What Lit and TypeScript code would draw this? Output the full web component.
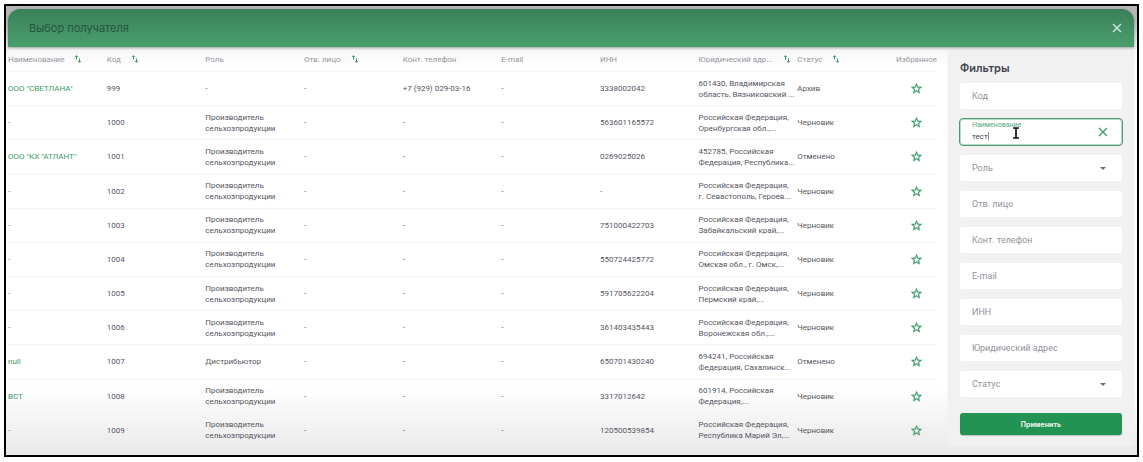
import { LitElement, html, css, svg } from "lit";
import { customElement, property, state } from "lit/decorators.js";

interface Column {
  title: string;
  sortable?: boolean;
}

interface Recipient {
  name: string;
  code: string;
  role: string;
  phone?: string;
  inn: string;
  address: string;
  status: string;
}

const COLUMNS: Column[] = [
  { title: "Наименование", sortable: true },
  { title: "Код", sortable: true },
  { title: "Роль" },
  { title: "Отв. лицо", sortable: true },
  { title: "Конт. телефон" },
  { title: "E-mail" },
  { title: "ИНН" },
  { title: "Юридический адр...", sortable: true },
  { title: "Статус", sortable: true },
  { title: "Избранное" },
];

const PRODUCER = "Производитель\nсельхозпродукции";

const RECIPIENTS: Recipient[] = [
  { name: 'ООО "СВЕТЛАНА"', code: "999", role: "-", phone: "+7 (929) 029-03-16", inn: "3338002042", address: "601430, Владимирская\nобласть, Вязниковский ...", status: "Архив" },
  { name: "-", code: "1000", role: PRODUCER, inn: "563601165572", address: "Российская Федерация,\nОренбургская обл.,...", status: "Черновик" },
  { name: 'ООО "КХ "АТЛАНТ"', code: "1001", role: PRODUCER, inn: "0269025026", address: "452785, Российская\nФедерация, Республика...", status: "Отменено" },
  { name: "-", code: "1002", role: PRODUCER, inn: "-", address: "Российская Федерация,\nг. Севастополь, Героев...", status: "Черновик" },
  { name: "-", code: "1003", role: PRODUCER, inn: "751000422703", address: "Российская Федерация,\nЗабайкальский край,...", status: "Черновик" },
  { name: "-", code: "1004", role: PRODUCER, inn: "550724425772", address: "Российская Федерация,\nОмская обл., г. Омск,...", status: "Черновик" },
  { name: "-", code: "1005", role: PRODUCER, inn: "591705622204", address: "Российская Федерация,\nПермский край,...", status: "Черновик" },
  { name: "-", code: "1006", role: PRODUCER, inn: "361403435443", address: "Российская Федерация,\nВоронежская обл.,...", status: "Черновик" },
  { name: "null", code: "1007", role: "Дистрибьютор", inn: "650701430240", address: "694241, Российская\nФедерация, Сахалинск...", status: "Отменено" },
  { name: "ВСТ", code: "1008", role: PRODUCER, inn: "3317012642", address: "601914, Российская\nФедерация,...", status: "Черновик" },
  { name: "-", code: "1009", role: PRODUCER, inn: "120500539854", address: "Российская Федерация,\nРеспублика Марий Эл,...", status: "Черновик" },
];

const cross = svg`<path d="M1 1 9 9M9 1 1 9" fill="none" stroke="currentColor" stroke-width="1.3"/>`;

@customElement("recipient-table")
export class RecipientTable extends LitElement {
  static styles = css`
    :host {
      display: block;
      min-width: 0;
    }
    .table {
      width: 100%;
      height: 100%;
      table-layout: fixed;
      border-collapse: collapse;
      font-family: Roboto, sans-serif;
      font-size: 8px;
      line-height: 11px;
      color: #55565f;
    }
    .table th {
      height: 24px;
      padding: 0;
      font-weight: 400;
      color: #96979f;
      text-align: left;
      white-space: nowrap;
    }
    .last {
      width: 40px;
    }
    .table td {
      padding: 0;
      border-top: 1px solid #f3f3f4;
      vertical-align: middle;
    }
    .table .lines {
      white-space: pre;
    }
    .table tbody tr:last-child td {
      border-bottom: 1px solid #e9e9ea;
    }
    .heading {
      display: flex;
      align-items: center;
      gap: 10px;
    }
    .wide {
      justify-content: space-between;
      padding-right: 8px;
    }
    .sort,
    .star {
      display: block;
      padding: 0;
      border: 0;
      background: none;
      color: #3c9a68;
      cursor: pointer;
    }
    .sort svg {
      display: block;
      width: 8px;
      height: 8px;
    }
    .star {
      margin: 0 auto;
    }
    .star svg {
      display: block;
      width: 13px;
      height: 13px;
    }
    .link {
      color: #3c9a68;
      text-decoration: none;
    }
  `;

  render() {
    return html`
      <table class="table">
        <thead>
          <tr>
            ${COLUMNS.map(
              (c, i) => html`<th scope="col" class=${i === 9 ? "last" : ""}>
                <div class="heading ${i === 7 ? "wide" : ""}">
                  <span>${c.title}</span>
                  ${c.sortable
                    ? html`<button class="sort" aria-label="Сортировать">
                        <svg viewBox="0 0 8 8" fill="none" stroke="currentColor">
                          <path d="M2.500 4.500V.8M1 2.200 2.500.7 4 2.200M5.500 3.500v3.800M4 5.800l1.500 1.500L7 5.800" />
                        </svg>
                      </button>`
                    : ""}
                </div>
              </th>`
            )}
          </tr>
        </thead>
        <tbody>
          ${RECIPIENTS.map(
            (r) => html`<tr>
              <td><a class="link" href="#">${r.name}</a></td>
              <td>${r.code}</td>
              <td class="lines">${r.role}</td>
              <td>-</td>
              <td>${r.phone ?? "-"}</td>
              <td>-</td>
              <td>${r.inn}</td>
              <td class="lines">${r.address}</td>
              <td>${r.status}</td>
              <td>
                <button class="star" aria-label="В избранное">
                  <svg viewBox="0 0 24 24" fill="currentColor">
                    <path d="m22 9.24-7.19-.62L12 2 9.19 8.63 2 9.24l5.46 4.73L5.82 21 12 17.27 18.18 21l-1.63-7.03L22 9.24zM12 15.4l-3.76 2.27 1-4.28-3.32-2.88 4.38-.38L12 6.1l1.71 4.04 4.38.38-3.32 2.88 1 4.28L12 15.4z" stroke="currentColor" stroke-width=".6" />
                  </svg>
                </button>
              </td>
            </tr>`
          )}
        </tbody>
      </table>
    `;
  }
}

@customElement("filter-field")
export class FilterField extends LitElement {
  @property() label = "";
  @property() kind = "text";
  @property() value = "";

  static styles = css`
    :host {
      display: block;
    }
    .field {
      position: relative;
      display: grid;
      align-items: center;
      height: 26px;
      border-radius: 2px;
      background: #fff;
      font-family: Roboto, sans-serif;
    }
    .label,
    .control {
      grid-area: 1 / 1;
    }
    .label {
      z-index: 1;
      padding-left: 12px;
      font-size: 9px;
      line-height: 12px;
      color: #92939a;
      pointer-events: none;
    }
    .control {
      width: 100%;
      height: 100%;
      min-width: 0;
      box-sizing: border-box;
      padding: 0 12px;
      border: 0;
      outline: 0;
      appearance: none;
      background: none;
      font-family: inherit;
      font-size: 8px;
      color: #44454d;
    }
    .arrow,
    .clear {
      grid-area: 1 / 1;
      justify-self: end;
      margin-right: 16px;
    }
    .arrow {
      width: 6px;
      height: 3px;
      fill: #6b6c72;
      pointer-events: none;
    }
    .clear {
      z-index: 1;
      margin-right: 14px;
      padding: 0;
      border: 0;
      background: none;
      color: #3c9a68;
    }
    .clear svg {
      display: block;
      width: 10px;
      height: 10px;
    }
    .active {
      border-radius: 3px;
      outline: 1px solid #4b9a72;
      box-shadow: inset 0 0 0 1px #b9dac8;
    }
    .active .label {
      align-self: start;
      font-size: 7px;
      color: #55a67b;
    }
    .active .control {
      padding-top: 8px;
    }
    .pointer {
      position: absolute;
      left: 27px;
      top: 6px;
      width: 34px;
      height: 16px;
      z-index: 2;
      pointer-events: none;
    }
  `;

  render() {
    const active = this.value !== "";
    return html`
      <div class="field ${active ? "active" : ""}">
        <label class="label" for="control">${this.label}</label>
        ${this.kind === "select"
          ? html`<select class="control" id="control"><option value=""></option></select>
              <svg class="arrow" viewBox="0 0 6 3"><path d="M0 0h6L3 3z" /></svg>`
          : html`<input class="control" id="control" .value=${this.value} />`}
        ${active
          ? html`<button class="clear" aria-label="Очистить">
                <svg viewBox="0 0 10 10">${cross}</svg>
              </button>
              <svg class="pointer" viewBox="0 0 34 16" fill="none">
                <path d="M1.5 7v8" stroke="#8b8c92" />
                <path d="M26 3h2.2l.8.6.8-.6H32M29 3.500v9M26 13h2.200l.8-.6.8.6H32" stroke="#111" stroke-width="1.700" />
              </svg>`
          : ""}
      </div>
    `;
  }
}

@customElement("app-root")
export class AppRoot extends LitElement {
  @state() private query = "тест";

  static styles = css`
    :host {
      display: block;
      font-family: Inter, "Noto Sans", sans-serif;
    }
    .page {
      box-sizing: border-box;
      min-height: 100vh;
      padding: 4px 4px 5px;
      display: grid;
      background: #fff;
    }
    .frame {
      display: flex;
      flex-direction: column;
      padding: 3px 3px 0 2px;
      border: 2px solid #000;
      background: linear-gradient(#b4b4b4, #b9b9b9 12px, #f6f6f6 44px, #fff 60px, #fff 380px, #e9e9ea);
    }
    .bar {
      display: flex;
      align-items: center;
      justify-content: space-between;
      height: 38px;
      padding: 0 12px 0 21px;
      border-radius: 12px 12px 0 0;
      background: linear-gradient(#3a8058, #4a9f6d);
      box-shadow: 0 1px 3px rgba(0, 0, 0, 0.35);
      z-index: 1;
    }
    .title {
      margin: 0;
      font-size: 11px;
      line-height: 16px;
      font-weight: 400;
      color: #23573b;
    }
    .close {
      padding: 0;
      border: 0;
      background: none;
      color: #d5ebdf;
    }
    .close svg {
      display: block;
      width: 10px;
      height: 10px;
    }
    .body {
      flex: 1;
      display: grid;
      grid-template-columns: minmax(0, 1fr) 186px;
      gap: 12px;
    }
    .list {
      padding-bottom: 7px;
    }
    .filters {
      display: flex;
      flex-direction: column;
      gap: 10px;
      margin-bottom: 10px;
      padding: 13px 12px 0;
      background: #f1f1f2;
      box-shadow: 0 0 3px #f1f1f2;
    }
    .subtitle {
      margin: 0 0 -3px;
      font-size: 11px;
      line-height: 16px;
      font-weight: 600;
      color: #44454f;
    }
    .apply {
      height: 22px;
      margin-top: 6px;
      padding: 0;
      border: 0;
      border-radius: 3px;
      background: #239353;
      box-shadow: 0 1px 1px rgba(0, 0, 0, 0.2);
      font-family: inherit;
      font-size: 7px;
      font-weight: 700;
      color: #e6f5ec;
    }
  `;

  render() {
    return html`
      <div class="page">
        <div class="frame">
          <header class="bar">
            <h1 class="title">Выбор получателя</h1>
            <button class="close" aria-label="Закрыть"><svg viewBox="0 0 10 10">${cross}</svg></button>
          </header>
          <div class="body">
            <recipient-table class="list"></recipient-table>
            <form class="filters">
              <h2 class="subtitle">Фильтры</h2>
              <filter-field label="Код"></filter-field>
              <filter-field label="Наименование" .value=${this.query}></filter-field>
              <filter-field label="Роль" kind="select"></filter-field>
              <filter-field label="Отв. лицо"></filter-field>
              <filter-field label="Конт. телефон"></filter-field>
              <filter-field label="E-mail"></filter-field>
              <filter-field label="ИНН"></filter-field>
              <filter-field label="Юридический адрес"></filter-field>
              <filter-field label="Статус" kind="select"></filter-field>
              <button class="apply" type="button">Применить</button>
            </form>
          </div>
        </div>
      </div>
    `;
  }
}
